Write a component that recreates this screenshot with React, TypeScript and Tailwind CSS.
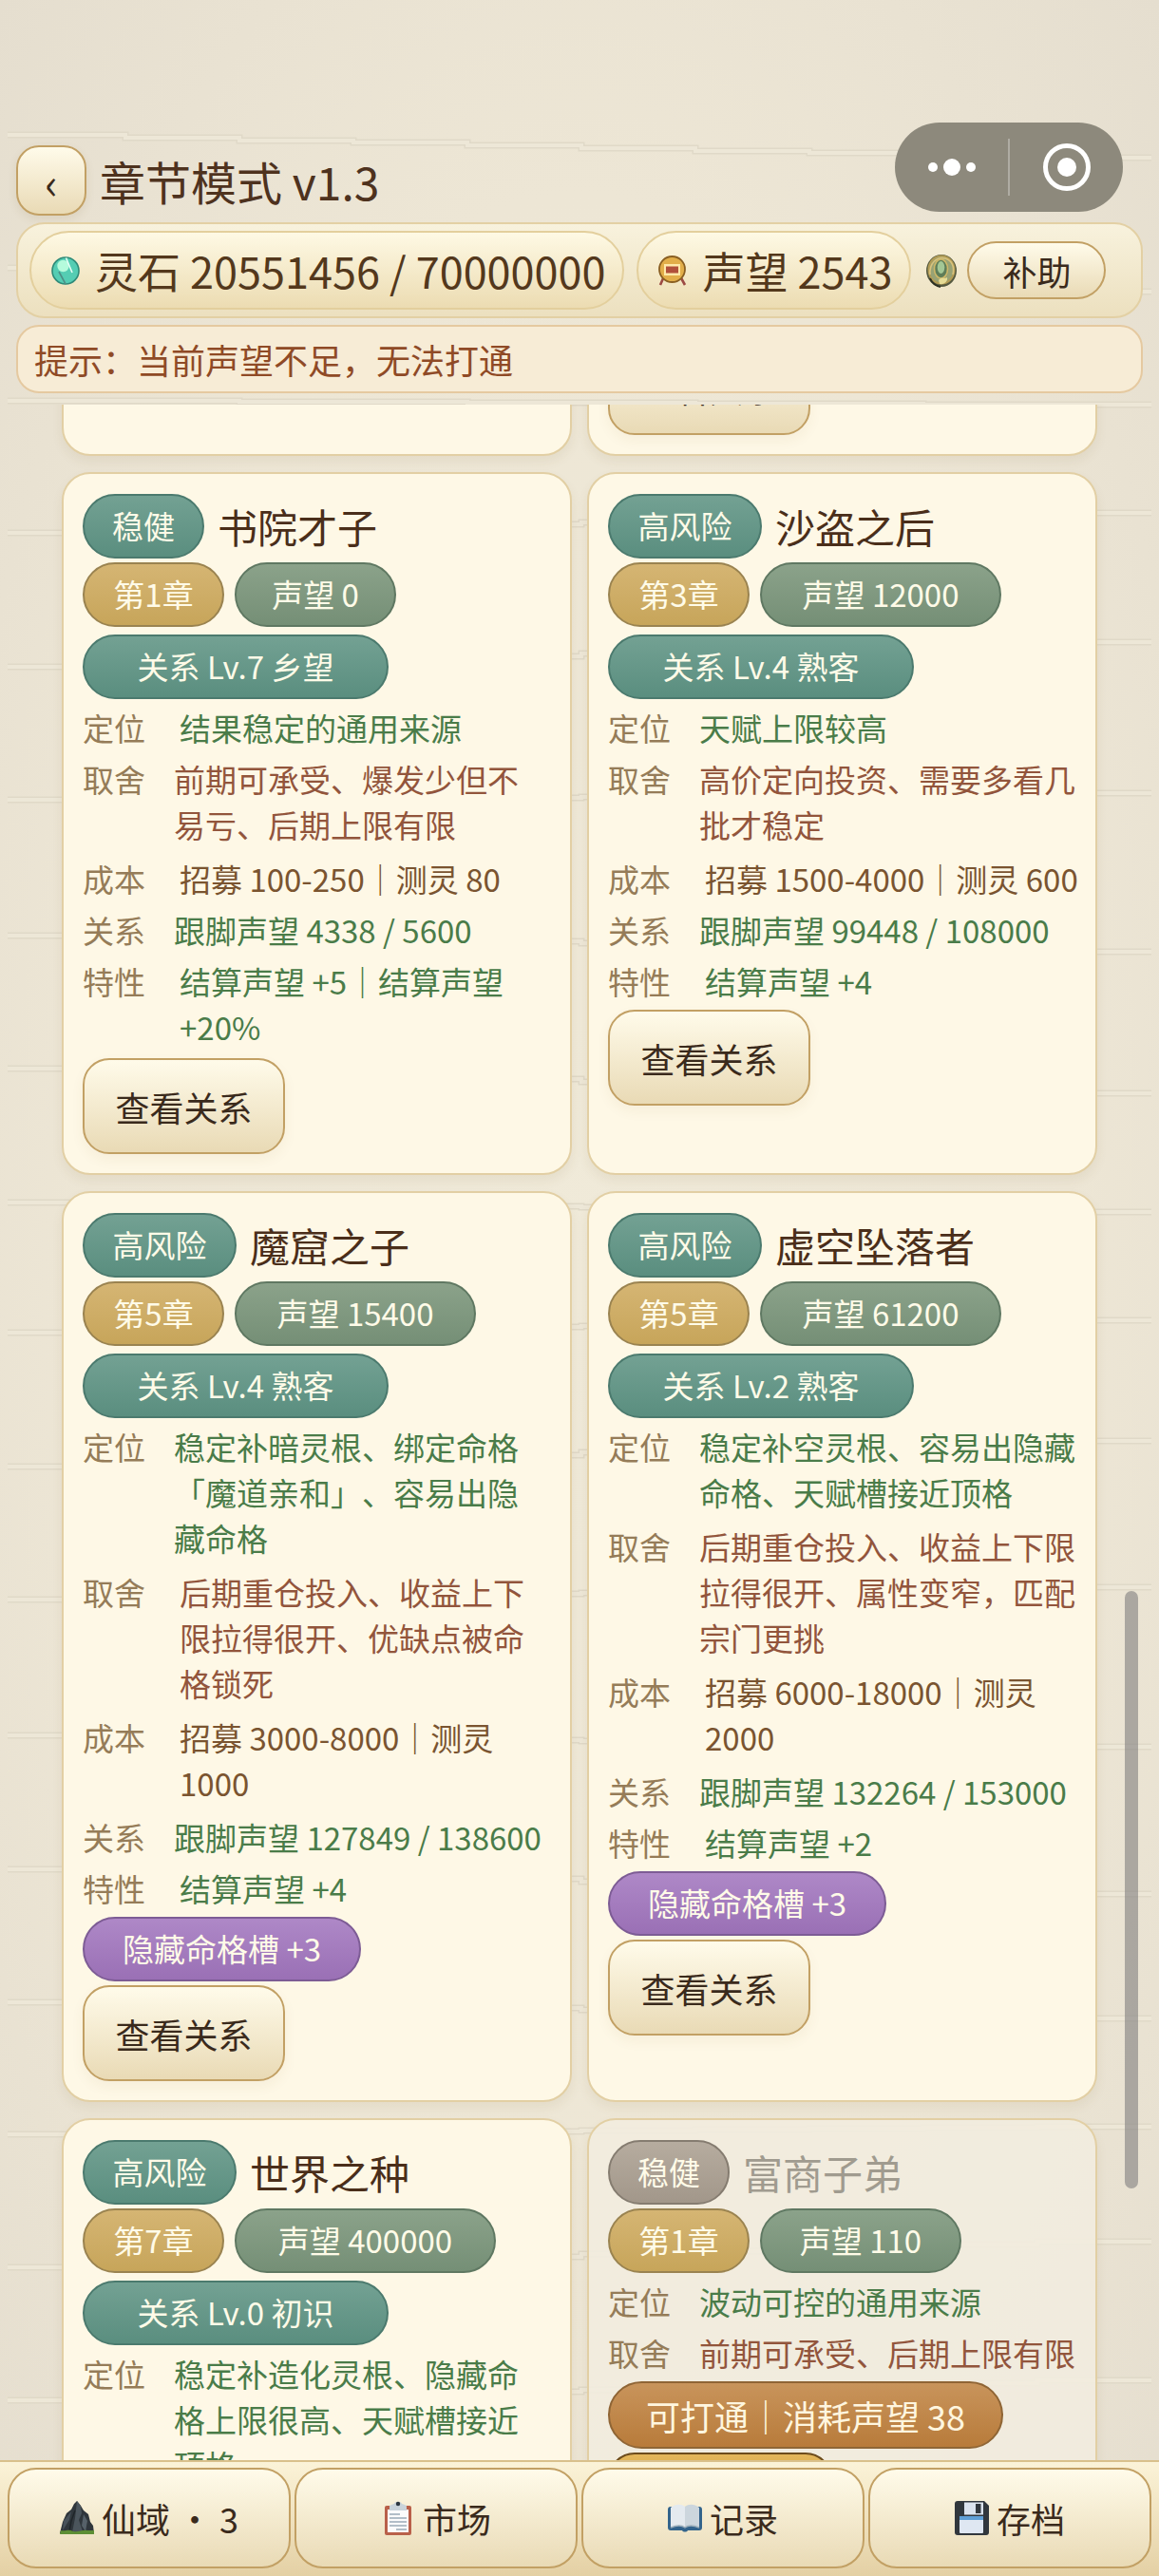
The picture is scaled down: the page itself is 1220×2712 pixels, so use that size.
import { useLayoutEffect, useRef } from "react";
import type { ReactNode } from "react";
import clsx from "clsx";

type Tone = "teal" | "gold" | "sage" | "purple" | "gray";

type ValueTone = "good" | "bad" | "cost";

interface Row {
  label: string;
  value: string;
  tone: ValueTone;
  inset?: boolean;
}

interface Origin {
  risk: string;
  name: string;
  chapter: string;
  fame: string;
  relation?: string;
  rows: Row[];
  hidden?: string;
  unlock?: string;
  locked?: boolean;
}

const origins: Origin[] = [
  {
    risk: "稳健",
    name: "书院才子",
    chapter: "第1章",
    fame: "声望 0",
    relation: "关系 Lv.7 乡望",
    rows: [
      { label: "定位", value: "结果稳定的通用来源", tone: "good", inset: true },
      { label: "取舍", value: "前期可承受、爆发少但不\n易亏、后期上限有限", tone: "bad" },
      { label: "成本", value: "招募 100-250｜测灵 80", tone: "cost", inset: true },
      { label: "关系", value: "跟脚声望 4338 / 5600", tone: "good" },
      { label: "特性", value: "结算声望 +5｜结算声望\n+20%", tone: "good", inset: true },
    ],
  },
  {
    risk: "高风险",
    name: "沙盗之后",
    chapter: "第3章",
    fame: "声望 12000",
    relation: "关系 Lv.4 熟客",
    rows: [
      { label: "定位", value: "天赋上限较高", tone: "good" },
      { label: "取舍", value: "高价定向投资、需要多看几\n批才稳定", tone: "bad" },
      { label: "成本", value: "招募 1500-4000｜测灵 600", tone: "cost", inset: true },
      { label: "关系", value: "跟脚声望 99448 / 108000", tone: "good" },
      { label: "特性", value: "结算声望 +4", tone: "good", inset: true },
    ],
  },
  {
    risk: "高风险",
    name: "魔窟之子",
    chapter: "第5章",
    fame: "声望 15400",
    relation: "关系 Lv.4 熟客",
    rows: [
      { label: "定位", value: "稳定补暗灵根、绑定命格\n「魔道亲和」、容易出隐\n藏命格", tone: "good" },
      { label: "取舍", value: "后期重仓投入、收益上下\n限拉得很开、优缺点被命\n格锁死", tone: "bad", inset: true },
      { label: "成本", value: "招募 3000-8000｜测灵\n1000", tone: "cost", inset: true },
      { label: "关系", value: "跟脚声望 127849 / 138600", tone: "good" },
      { label: "特性", value: "结算声望 +4", tone: "good", inset: true },
    ],
    hidden: "隐藏命格槽 +3",
  },
  {
    risk: "高风险",
    name: "虚空坠落者",
    chapter: "第5章",
    fame: "声望 61200",
    relation: "关系 Lv.2 熟客",
    rows: [
      { label: "定位", value: "稳定补空灵根、容易出隐藏\n命格、天赋槽接近顶格", tone: "good" },
      { label: "取舍", value: "后期重仓投入、收益上下限\n拉得很开、属性变窄，匹配\n宗门更挑", tone: "bad" },
      { label: "成本", value: "招募 6000-18000｜测灵\n2000", tone: "cost", inset: true },
      { label: "关系", value: "跟脚声望 132264 / 153000", tone: "good" },
      { label: "特性", value: "结算声望 +2", tone: "good", inset: true },
    ],
    hidden: "隐藏命格槽 +3",
  },
  {
    risk: "高风险",
    name: "世界之种",
    chapter: "第7章",
    fame: "声望 400000",
    relation: "关系 Lv.0 初识",
    rows: [
      { label: "定位", value: "稳定补造化灵根、隐藏命\n格上限很高、天赋槽接近\n顶格", tone: "good" },
    ],
  },
  {
    risk: "稳健",
    name: "富商子弟",
    chapter: "第1章",
    fame: "声望 110",
    rows: [
      { label: "定位", value: "波动可控的通用来源", tone: "good" },
      { label: "取舍", value: "前期可承受、后期上限有限", tone: "bad" },
    ],
    unlock: "可打通｜消耗声望 38",
    locked: true,
  },
];

const tagTones: Record<Tone, string> = {
  teal: "border-[#4b7a6e] from-[#73a193] to-[#5a8e7f]",
  gold: "border-[#9a8350] from-[#d5b573] to-[#c7a55a]",
  sage: "border-[#5f7862] from-[#8ba28a] to-[#758f76]",
  purple: "border-[#7d5c95] from-[#ae88c7] to-[#9a70b5]",
  gray: "border-[#857c70] from-[#b6ac9f] to-[#a2978a]",
};

const valueTones: Record<ValueTone, string> = {
  good: "text-[#4a7c49]",
  bad: "text-[#92553c]",
  cost: "text-[#7a5430]",
};

// pills reserve a fixed slot for each character, wide for hanzi and narrow for the rest
function tagWidth(text: string) {
  let width = 60;

  for (const ch of text) {
    width += ch > "\u2e7f" ? 34 : 21;
  }

  return width;
}

function Tag({ tone, children }: { tone: Tone; children: string }) {
  return (
    <span
      style={{ width: tagWidth(children) }}
      className={clsx(
        "flex h-[68px] items-center justify-center rounded-full border-2 bg-linear-to-b text-[33px] whitespace-nowrap text-[#fffbe8]",
        tagTones[tone],
      )}
    >
      {children}
    </span>
  );
}

function RelationButton() {
  return (
    <button
      type="button"
      className="mt-1.5 h-[101px] w-[213px] rounded-[28px] border-2 border-[#c2a064] bg-linear-to-b from-[#fffbea] to-[#e9dab5] text-[36px] text-[#3a2a1c] shadow-[0_6px_14px_rgba(120,90,40,0.06)]"
    >
      查看关系
    </button>
  );
}

function Card({ locked, children }: { locked?: boolean; children?: ReactNode }) {
  return (
    <article
      className={clsx(
        "flex flex-col items-start rounded-[30px] border-2 border-[#e2cfa4] px-5 pt-[21px] pb-5 shadow-[0_6px_12px_rgba(120,90,40,0.08)]",
        locked ? "bg-[#f2ecdf]/90" : "bg-[#fef8e6]",
      )}
    >
      {children}
    </article>
  );
}

function OriginCard({ origin }: { origin: Origin }) {
  return (
    <Card locked={origin.locked}>
      <div className="flex items-center gap-3.5">
        <Tag tone={origin.locked ? "gray" : "teal"}>{origin.risk}</Tag>
        <h2
          className={clsx(
            "text-[42px] leading-[60px]",
            origin.locked ? "text-[#a09b8f]" : "text-[#4a2e1a]",
          )}
        >
          {origin.name}
        </h2>
      </div>

      <div className="mt-1 flex gap-[11px]">
        <Tag tone="gold">{origin.chapter}</Tag>
        <Tag tone="sage">{origin.fame}</Tag>
      </div>

      {origin.relation && (
        <div className="mt-2">
          <Tag tone="teal">{origin.relation}</Tag>
        </div>
      )}

      <dl className="text-[33px] leading-[48px] [text-spacing-trim:space-all]">
        {origin.rows.map((row) => (
          <div
            key={row.label}
            className={clsx("mt-1.5 flex", row.value.includes("\n") && "pb-[3px]")}
          >
            <dt className={clsx("shrink-0 text-[#957c58]", row.inset ? "w-[102px]" : "w-24")}>
              {row.label}
            </dt>
            <dd className={clsx("whitespace-pre", valueTones[row.tone])}>{row.value}</dd>
          </div>
        ))}
      </dl>

      {origin.hidden && (
        <div className="mt-1.5 -mb-0.5">
          <Tag tone="purple">{origin.hidden}</Tag>
        </div>
      )}

      {origin.unlock ? (
        <>
          <span className="mt-1.5 flex h-[71px] items-center rounded-full border-2 border-[#8f6535] bg-linear-to-b from-[#c8945b] to-[#b87b3a] px-[38px] text-[36px] whitespace-nowrap text-[#fff6df]">
            {origin.unlock}
          </span>
          <button
            type="button"
            className="mt-1 h-[101px] w-[236px] rounded-[28px] border-2 border-[#6d4c1c] bg-linear-to-b from-[#e3b65a] to-[#c9963a] text-[36px] text-[#3a2a1c]"
          >
            打通
          </button>
        </>
      ) : (
        <RelationButton />
      )}
    </Card>
  );
}

function SpiritStone() {
  return (
    <svg viewBox="0 0 30 30" className="size-[30px] shrink-0" aria-hidden="true">
      <circle cx="15" cy="15" r="14" fill="#55cdb3" stroke="#2f8a78" strokeWidth="1.6" />
      <circle cx="12.5" cy="10" r="6.2" fill="#b5fbdc" />
      <path d="M15.5 1.5 L22 17" stroke="#e6fff6" strokeWidth="1.6" />
      <path d="M8 16 L15 29" stroke="#4e8f86" strokeWidth="1.6" />
    </svg>
  );
}

function FameMedal() {
  return (
    <svg viewBox="0 0 30 32" className="h-8 w-[30px] shrink-0" aria-hidden="true">
      <path d="M6 22 L2 31 M23 22 L28 31" stroke="#9c4a44" strokeWidth="2.6" />
      <circle cx="14.5" cy="14.5" r="13.5" fill="#e2ae49" stroke="#8a5f22" strokeWidth="1.8" />
      <rect x="6" y="9" width="17" height="12" fill="#ffe9a8" />
      <rect x="8" y="11.5" width="13" height="7" fill="#b1503a" />
    </svg>
  );
}

function JadeToken() {
  return (
    <svg viewBox="0 0 34 36" className="mx-0.5 h-9 w-[34px] shrink-0" aria-hidden="true">
      <ellipse cx="17" cy="18" rx="16" ry="17" fill="#565a40" />
      <ellipse cx="17" cy="17" rx="13.5" ry="14.5" fill="#98a274" stroke="#b39c55" strokeWidth="2" />
      <path d="M5 22 C4 10 12 3 21 5 C28 7 31 14 29 22" fill="none" stroke="#d9c27c" strokeWidth="1.6" />
      <ellipse cx="16.5" cy="16" rx="7" ry="10" fill="#5f7d58" stroke="#cdb768" strokeWidth="1.6" />
      <ellipse cx="16.5" cy="14.5" rx="3.8" ry="6.5" fill="#a3c795" />
      <path d="M14 28 C17 24 19 27 23 25 C24 29 20 33 15 32 Z" fill="#e6dc95" />
      <path d="M5 26 C7 31 11 34 16 35" fill="none" stroke="#2c3022" strokeWidth="2" />
    </svg>
  );
}

function MountainIcon() {
  return (
    <svg viewBox="0 0 36 36" className="size-9 shrink-0" aria-hidden="true">
      <path d="M0 34 L3 22 L7 13 L12 9 L15 3 L18 0 L22 5 L25 10 L30 14 L32 22 L35 26 L36 34 Z" fill="#2f363b" />
      <path d="M18 0 L22 5 L23 13 L20 20 L24 32 L13 33 L16 18 Z" fill="#4b555c" />
      <path d="M4 21 L12 11 L10 20 L3 31 Z" fill="#48525a" />
      <path d="M25 14 L29 21 L27 32 L23 26 Z" fill="#566169" />
      <path d="M16 10 L12 21 L10 32" stroke="#1f2529" strokeWidth="1.4" fill="none" />
      <path d="M0 35 L1 31 C7 32 9 29 14 32 C20 33 24 30 29 31 L36 31 L36 35 Z" fill="#5d8f35" />
    </svg>
  );
}

function ClipboardIcon() {
  return (
    <svg viewBox="0 0 36 36" className="size-9 shrink-0" aria-hidden="true">
      <rect x="4" y="5" width="28" height="31" rx="2" fill="#b9604a" />
      <rect x="7" y="9" width="22" height="24" fill="#fbfbfb" />
      <path d="M9 10 V6 C9 4 12 4 14 3 C15 0 21 0 22 3 C24 4 27 4 27 6 V10 Z" fill="#c9d3da" />
      <circle cx="18" cy="3" r="2.2" fill="#2c3640" />
      <path d="M9 14 H20 M9 18 H27 M9 22 H27 M9 26 H27 M16 30 H27" stroke="#9aabb8" strokeWidth="1.6" />
    </svg>
  );
}

function BookIcon() {
  return (
    <svg viewBox="0 0 36 36" className="size-9 shrink-0" aria-hidden="true">
      <path d="M0 9 C0 7 1 6 3 6 H33 C35 6 36 7 36 9 V28 C36 30 35 31 33 31 H21 C20 33 16 33 15 31 H3 C1 31 0 30 0 28 Z" fill="#33648c" />
      <path d="M3 7 C8 3 14 3 18 6 V28 C14 25 8 26 3 28 Z" fill="#e4eaef" />
      <path d="M33 7 C28 3 22 3 18 6 V28 C22 25 28 26 33 28 Z" fill="#ccd6dd" />
      <path d="M3 28 C8 26 14 25 18 28 C22 25 28 26 33 28" stroke="#9dafbb" strokeWidth="1.4" fill="none" />
    </svg>
  );
}

function DiskIcon() {
  return (
    <svg viewBox="0 0 36 36" className="size-9 shrink-0" aria-hidden="true">
      <path d="M3 0 H31 L36 5 V33 C36 35 35 36 33 36 H3 C1 36 0 35 0 33 V3 C0 1 1 0 3 0 Z" fill="#31373d" />
      <rect x="10" y="1.5" width="20" height="13" fill="#dbe3ee" />
      <rect x="22" y="3" width="5.5" height="10" fill="#31373d" />
      <rect x="5" y="16" width="25" height="18" rx="1" fill="#dfe7f2" />
      <rect x="5" y="16" width="25" height="4" fill="#5f9fd6" />
    </svg>
  );
}

// [left, middle, right] heights of the faint seams running across the paper
const seams = [
  [142, 156, 169],
  [282, 297, 310],
  [422, 424, 427],
  [561, 550, 538],
  [702, 688, 673],
  [842, 839, 834],
  [985, 993, 1004],
  [1125, 1139, 1154],
  [1266, 1271, 1277],
  [1403, 1396, 1388],
  [1544, 1529, 1514],
  [1684, 1677, 1670],
  [1827, 1833, 1840],
  [1968, 1981, 1997],
  [2108, 2116, 2127],
  [2247, 2243, 2238],
  [2387, 2373, 2357],
  [2527, 2516, 2504],
];

function seamPath([left, middle, right]: number[]) {
  let d = `M8 ${left}`;

  for (let i = 0; i < 10; i++) {
    const t = i / 5;
    const y = t < 1 ? left + (middle - left) * t : middle + (right - middle) * (t - 1);
    d += ` V${Math.round(y)} H${12 + (i + 1) * 120}`;
  }

  return d;
}

function PaperTexture() {
  return (
    <svg
      viewBox="0 0 1220 2712"
      preserveAspectRatio="none"
      className="absolute inset-0 -z-10 h-full w-full"
      aria-hidden="true"
    >
      {seams.map((seam) => (
        <g key={seam[0]} fill="none">
          <path d={seamPath(seam)} stroke="#e0d9c8" strokeWidth="7" />
          <path d={seamPath(seam)} stroke="#ede7d7" strokeWidth="4" />
        </g>
      ))}
    </svg>
  );
}

const navItems = [
  { label: "仙域 ・ 3", icon: <MountainIcon /> },
  { label: "市场", icon: <ClipboardIcon /> },
  { label: "记录", icon: <BookIcon /> },
  { label: "存档", icon: <DiskIcon /> },
];

export default function App() {
  const listRef = useRef<HTMLDivElement>(null);

  useLayoutEffect(() => {
    if (listRef.current) listRef.current.scrollTop = 98;
  }, []);

  return (
    <div className="relative isolate flex h-screen flex-col overflow-hidden bg-[radial-gradient(ellipse_at_center,#f0ead9_0%,#ede6d5_60%,#e5decf_100%)] font-['Noto_Sans_CJK_SC',sans-serif]">
      <PaperTexture />

      <div className="absolute top-[129px] right-[38px] flex h-[94px] w-60 items-center rounded-full bg-[#8d897c]">
        <button type="button" aria-label="更多" className="flex flex-1 items-center justify-center gap-1.5">
          <span className="size-2.5 rounded-full bg-white" />
          <span className="size-[18px] rounded-full bg-white" />
          <span className="size-2.5 rounded-full bg-white" />
        </button>
        <span className="h-[60px] w-0.5 bg-white/30" />
        <button type="button" aria-label="关闭" className="flex flex-1 items-center justify-center">
          <span className="flex size-[50px] items-center justify-center rounded-full border-[5px] border-white">
            <span className="size-5 rounded-full bg-white" />
          </span>
        </button>
      </div>

      <header className="flex flex-col gap-[7px] px-[17px] pt-[153px] pb-3">
        <div className="flex items-center gap-3.5">
          <button
            type="button"
            aria-label="返回"
            className="size-[74px] rounded-3xl border-2 border-[#c2a064] bg-linear-to-b from-[#fffbea] to-[#e9dab5] text-[45px] leading-none text-[#3a2a1c] shadow-[0_4px_10px_rgba(120,90,40,0.10)]"
          >
            ‹
          </button>
          <h1 className="text-[48px] leading-[74px] text-[#4e321e]">章节模式 v1.3</h1>
        </div>

        <div className="flex h-[101px] items-center gap-[13px] rounded-[30px] border-2 border-[#e3d0a4] bg-linear-to-b from-[#f8f2dd] to-[#ece0bf] px-3">
          <div className="flex h-[83px] items-center gap-4 rounded-full border-2 border-[#e3cf9d] bg-linear-to-b from-[#fef9e4] to-[#ecdcb2] pr-[18px] pl-[21px] text-[45px] whitespace-nowrap text-[#53381c]">
            <SpiritStone />
            灵石 20551456 / 70000000
          </div>
          <div className="flex h-[83px] items-center gap-4 rounded-full border-2 border-[#e3cf9d] bg-linear-to-b from-[#fef9e4] to-[#ecdcb2] pr-[18px] pl-[21px] text-[45px] whitespace-nowrap text-[#53381c]">
            <FameMedal />
            声望 2543
          </div>
          <div className="flex items-center gap-2">
            <JadeToken />
            <button
              type="button"
              className="h-[61px] w-[146px] rounded-full border-2 border-[#c2a064] bg-linear-to-b from-[#fffbea] to-[#e9dab5] text-[36px] leading-none text-[#3a2a1c]"
            >
              补助
            </button>
          </div>
        </div>

        <p className="flex h-[72px] items-center rounded-3xl border-2 border-[#e5c9a0] bg-[#f7ecd6] px-[17px] text-[36px] text-[#8f4a26]">
          提示：当前声望不足，无法打通
        </p>
      </header>

      <main className="relative min-h-0 flex-1">
        <div
          ref={listRef}
          className="h-full overflow-x-hidden overflow-y-auto px-[65px] [scrollbar-width:none]"
        >
          <div className="grid grid-cols-2 gap-x-4 gap-y-[17px]">
            <Card />
            <Card>
              <RelationButton />
            </Card>

            {origins.map((origin) => (
              <OriginCard key={origin.name} origin={origin} />
            ))}
          </div>
        </div>

        <div className="absolute top-[1249px] right-[22px] h-[629px] w-3.5 rounded-full bg-[#807f7e]/60" />
      </main>

      <nav className="grid h-[122px] grid-cols-4 gap-1 border-t-2 border-[#d9c08c] bg-linear-to-b from-[#fbf3d8] to-[#e4d0a4] px-2 pt-1.5 pb-2">
        {navItems.map((item) => (
          <button
            key={item.label}
            type="button"
            className="flex items-center justify-center gap-2 rounded-[30px] border-2 border-[#c2a064] bg-linear-to-b from-[#fffbea] to-[#e9dab5] text-[36px] whitespace-pre text-[#3a2a1c]"
          >
            {item.icon}
            {item.label}
          </button>
        ))}
      </nav>
    </div>
  );
}
